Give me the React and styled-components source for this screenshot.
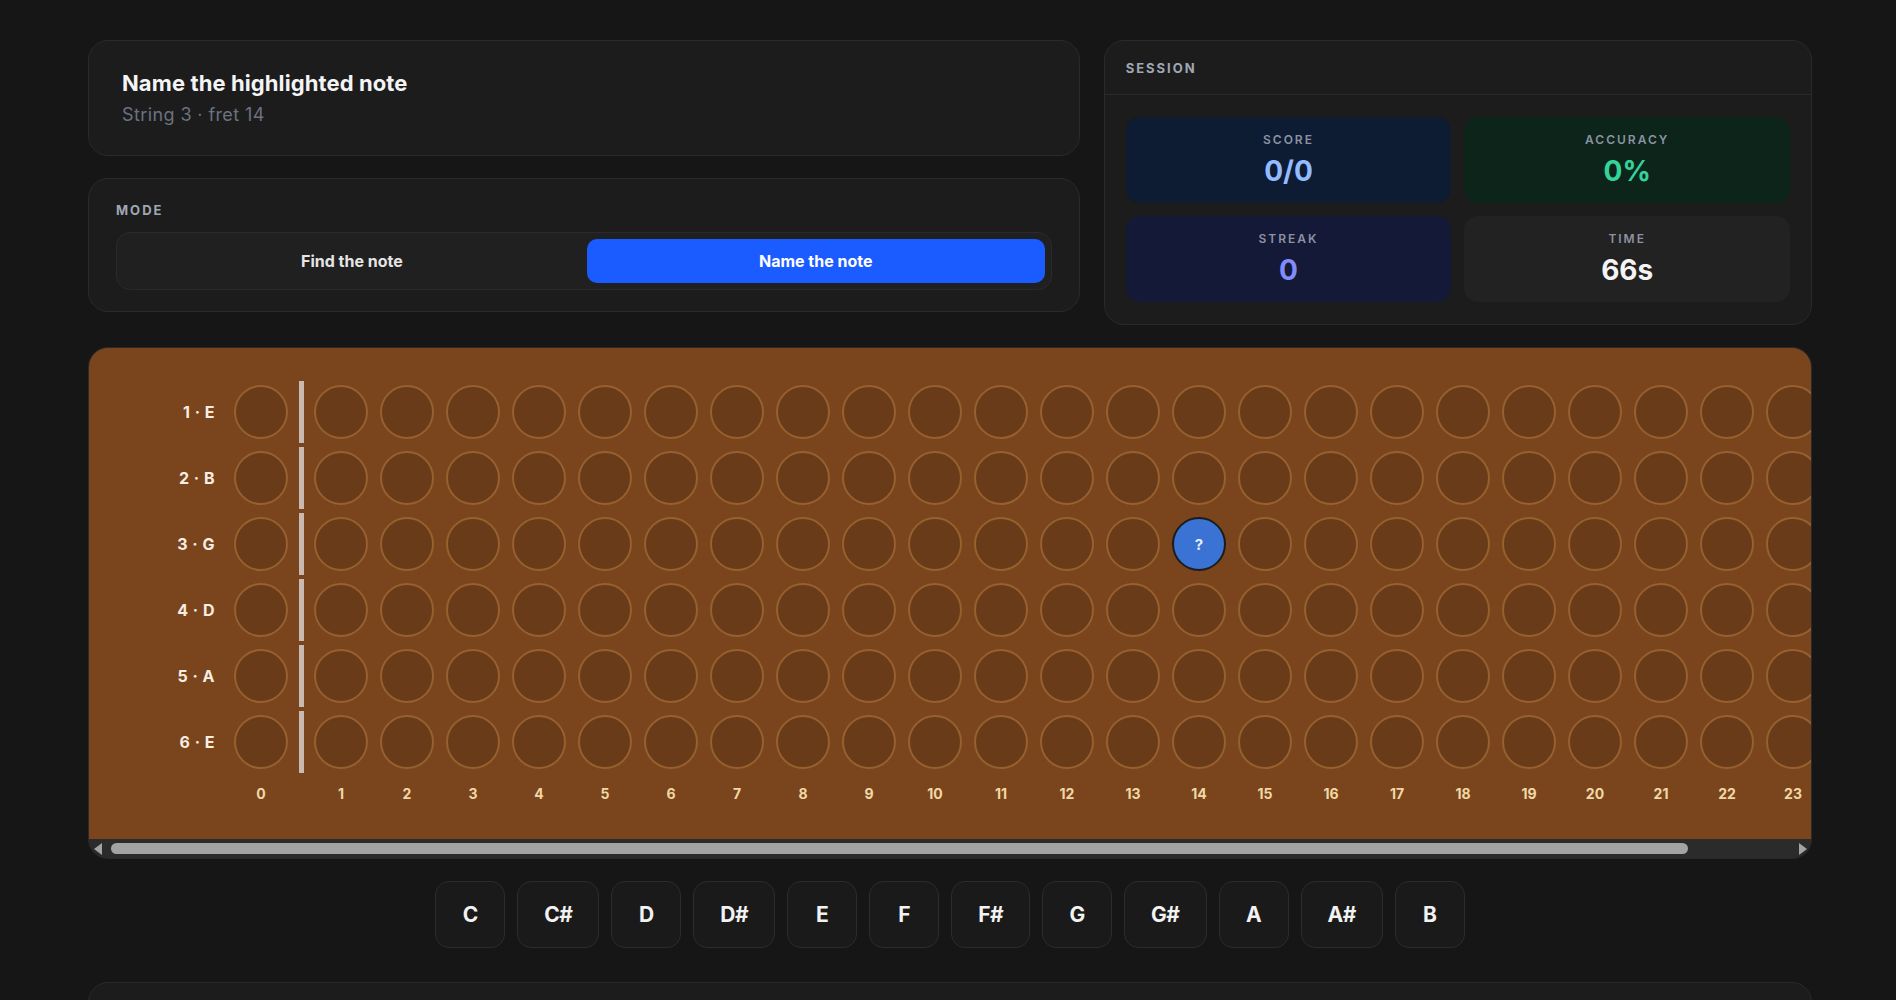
import React from "react";
import styled, { createGlobalStyle } from "styled-components";

const GlobalStyle = createGlobalStyle`
  html { scrollbar-width: none; background: #161616; }
  html::-webkit-scrollbar { display: none; }
  body {
    margin: 0;
    background: #161616;
    font-family: Inter, "Noto Sans", sans-serif;
    color: #f2f2f2;
  }
  * { box-sizing: border-box; }
`;

const Page = styled.div`
  padding: 40px 84px 60px 88px;
  display: flex;
  flex-direction: column;
  gap: 22px;
`;

const TopGrid = styled.div`
  display: grid;
  grid-template-columns: 7fr 5fr;
  gap: 24px;
  align-items: start;
`;

const LeftCol = styled.div`
  display: flex;
  flex-direction: column;
  gap: 22px;
`;

const Card = styled.section`
  background: #1c1c1c;
  border: 1px solid #2a2a2a;
  border-radius: 20px;
`;

const PromptCard = styled(Card)`
  padding: 28px 33px 28px;
`;

const Title = styled.h1`
  margin: 0;
  font-size: 22px;
  line-height: 28px;
  font-weight: 700;
  color: #f4f4f5;
  letter-spacing: 0.1px;
`;

const Subtitle = styled.div`
  margin-top: 6px;
  font-size: 18px;
  line-height: 24px;
  color: #6b7280;
  letter-spacing: 0.4px;
`;

const ModeCard = styled(Card)`
  padding: 23px 27px 21px;
`;

const SectionLabel = styled.div`
  font-size: 13px;
  line-height: 16px;
  font-weight: 700;
  letter-spacing: 2px;
  color: #a0a7b4;
`;

const Segmented = styled.div`
  margin-top: 14px;
  display: grid;
  grid-template-columns: 1fr 1fr;
  gap: 6px;
  padding: 6px;
  background: #202020;
  border: 1px solid #2a2a2a;
  border-radius: 14px;
`;

const SegButton = styled.button`
  height: 44px;
  border: none;
  border-radius: 10px;
  font-family: inherit;
  font-size: 16px;
  font-weight: 700;
  color: ${(p) => (p.$active ? "#ffffff" : "#e5e5e5")};
  background: ${(p) => (p.$active ? "#1a5cff" : "transparent")};
  cursor: pointer;
`;

const SessionCard = styled(Card)``;

const SessionHeader = styled.div`
  height: 54px;
  display: flex;
  align-items: center;
  padding: 0 21px;
  border-bottom: 1px solid #2a2a2a;
`;

const StatGrid = styled.div`
  display: grid;
  grid-template-columns: 1fr 1fr;
  gap: 13px;
  padding: 22px 21px 22px;
`;

const StatBox = styled.div`
  height: 86px;
  border-radius: 14px;
  background: ${(p) => p.$bg};
  display: flex;
  flex-direction: column;
  align-items: center;
  justify-content: center;
  gap: 6px;
`;

const StatLabel = styled.div`
  font-size: 12px;
  line-height: 16px;
  font-weight: 600;
  letter-spacing: 2px;
  color: #8b93a1;
`;

const StatValue = styled.div`
  font-size: 28px;
  line-height: 34px;
  font-weight: 700;
  color: ${(p) => p.$color};
`;

const Board = styled.div`
  border: 1px solid #2a2a2a;
  border-radius: 20px;
  overflow: hidden;
  display: flex;
  flex-direction: column;
  background: #2b2b2b;
`;

const BoardViewport = styled.div`
  background: #7a451c;
  overflow: hidden;
`;

const BoardInner = styled.div`
  width: max-content;
  padding: 33px 24px 36px 24px;
  display: flex;
  flex-direction: column;
  gap: 4px;
`;

const ScrollBar = styled.div`
  height: 19px;
  display: flex;
  align-items: center;
  background: #2b2b2b;
`;

const ScrollArrow = styled.div`
  width: 17px;
  height: 19px;
  display: flex;
  align-items: center;
  justify-content: center;
  &::before {
    content: "";
    width: 0;
    height: 0;
    border-top: 6px solid transparent;
    border-bottom: 6px solid transparent;
    ${(p) =>
      p.$dir === "left"
        ? "border-right: 8px solid #a3a3a3;"
        : "border-left: 8px solid #a3a3a3;"}
  }
`;

const ScrollTrack = styled.div`
  flex: 1;
  height: 100%;
  display: flex;
  align-items: center;
  padding: 0 2px 0 5px;
`;

const ScrollThumb = styled.div`
  height: 11px;
  border-radius: 6px;
  background: #a3a3a3;
`;

const StringRow = styled.div`
  display: flex;
  align-items: center;
  height: 62px;
`;

const StringLabel = styled.div`
  width: 102px;
  margin-right: 13px;
  text-align: right;
  font-size: 16px;
  font-weight: 700;
  letter-spacing: 0.5px;
  color: #f7ede2;
`;

const FretCell = styled.div`
  width: 66px;
  height: 62px;
  display: flex;
  align-items: center;
  justify-content: center;
`;

const Nut = styled.div`
  width: 14px;
  height: 62px;
  display: flex;
  justify-content: center;
  &::before {
    content: "";
    width: 5px;
    height: 100%;
    background: ${(p) => (p.$visible ? "#c9b9b1" : "transparent")};
  }
`;

const Dot = styled.div`
  width: 54px;
  height: 54px;
  border-radius: 50%;
  display: flex;
  align-items: center;
  justify-content: center;
  background: ${(p) => (p.$active ? "#3b73d4" : "#6a3b18")};
  border: 2px solid ${(p) => (p.$active ? "#1c1c1c" : "#96602f")};
  color: #e8eefb;
  font-size: 15px;
  font-weight: 700;
`;

const NumberRow = styled.div`
  display: flex;
  align-items: center;
  height: 20px;
  margin-top: 6px;
`;

const FretNumber = styled.div`
  width: 66px;
  text-align: center;
  font-size: 14px;
  font-weight: 700;
  color: #f0d8a6;
`;

const NoteRow = styled.div`
  display: flex;
  justify-content: center;
  gap: 12px;
  padding-bottom: 12px;
`;

const NoteButton = styled.button`
  height: 67px;
  padding: 0 26px;
  min-width: 70px;
  background: #1a1a1a;
  border: 1px solid #2c2c2c;
  border-radius: 14px;
  font-family: inherit;
  font-size: 21px;
  font-weight: 700;
  letter-spacing: -0.5px;
  color: #f2f2f2;
  cursor: pointer;
`;

const HistoryCard = styled(Card)`
  min-height: 140px;
`;

const strings = ["1 · E", "2 · B", "3 · G", "4 · D", "5 · A", "6 · E"];
const frets = Array.from({ length: 24 }, (_, i) => i);
const notes = ["C", "C#", "D", "D#", "E", "F", "F#", "G", "G#", "A", "A#", "B"];
const target = { string: 2, fret: 14 };
const visibleRatio = 0.938;

export default function App() {
  return (
    <>
      <GlobalStyle />
      <Page>
        <TopGrid>
          <LeftCol>
            <PromptCard>
              <Title>Name the highlighted note</Title>
              <Subtitle>String 3 · fret 14</Subtitle>
            </PromptCard>
            <ModeCard>
              <SectionLabel>MODE</SectionLabel>
              <Segmented>
                <SegButton>Find the note</SegButton>
                <SegButton $active>Name the note</SegButton>
              </Segmented>
            </ModeCard>
          </LeftCol>
          <SessionCard>
            <SessionHeader>
              <SectionLabel>SESSION</SectionLabel>
            </SessionHeader>
            <StatGrid>
              <StatBox $bg="#0d1b33">
                <StatLabel>SCORE</StatLabel>
                <StatValue $color="#93bbff">0/0</StatValue>
              </StatBox>
              <StatBox $bg="#0c2419">
                <StatLabel>ACCURACY</StatLabel>
                <StatValue $color="#34d399">0%</StatValue>
              </StatBox>
              <StatBox $bg="#141938">
                <StatLabel>STREAK</StatLabel>
                <StatValue $color="#818cf8">0</StatValue>
              </StatBox>
              <StatBox $bg="#222222">
                <StatLabel>TIME</StatLabel>
                <StatValue $color="#f4f4f5">66s</StatValue>
              </StatBox>
            </StatGrid>
          </SessionCard>
        </TopGrid>

        <Board>
          <BoardViewport>
            <BoardInner>
              {strings.map((label, s) => (
                <StringRow key={label}>
                  <StringLabel>{label}</StringLabel>
                  {frets.map((f) => {
                    const active = s === target.string && f === target.fret;
                    return (
                      <React.Fragment key={f}>
                        <FretCell>
                          <Dot $active={active}>{active ? "?" : ""}</Dot>
                        </FretCell>
                        {f === 0 && <Nut $visible />}
                      </React.Fragment>
                    );
                  })}
                </StringRow>
              ))}
              <NumberRow>
                <StringLabel />
                {frets.map((f) => (
                  <React.Fragment key={f}>
                    <FretNumber>{f}</FretNumber>
                    {f === 0 && <Nut />}
                  </React.Fragment>
                ))}
              </NumberRow>
            </BoardInner>
          </BoardViewport>
          <ScrollBar>
            <ScrollArrow $dir="left" />
            <ScrollTrack>
              <ScrollThumb style={{ width: `${visibleRatio * 100}%` }} />
            </ScrollTrack>
            <ScrollArrow $dir="right" />
          </ScrollBar>
        </Board>

        <NoteRow>
          {notes.map((n) => (
            <NoteButton key={n}>{n}</NoteButton>
          ))}
        </NoteRow>

        <HistoryCard />
      </Page>
    </>
  );
}
